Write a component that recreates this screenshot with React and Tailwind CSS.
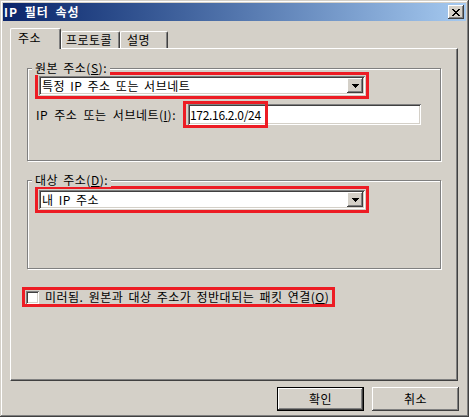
import React from 'react'

const raised =
  'shadow-[inset_-1px_-1px_#404040,inset_1px_1px_#ffffff,inset_-2px_-2px_#808080,inset_2px_2px_#d4d0c8]'
const sunken =
  'shadow-[inset_1px_1px_#808080,inset_-1px_-1px_#ffffff,inset_2px_2px_#404040,inset_-2px_-2px_#d4d0c8]'
const frame =
  'shadow-[inset_-1px_-1px_#404040,inset_1px_1px_#d4d0c8,inset_-2px_-2px_#808080,inset_2px_2px_#ffffff]'

function CloseIcon() {
  return (
    <svg width="8" height="7" viewBox="0 0 8 7" shapeRendering="crispEdges">
      <path
        fill="#000"
        d="M0 0h2v1H0zM6 0h2v1H6zM1 1h2v1H1zM5 1h2v1H5zM2 2h4v1H2zM3 3h2v1H3zM2 4h4v1H2zM1 5h2v1H1zM5 5h2v1H5zM0 6h2v1H0zM6 6h2v1H6z"
      />
    </svg>
  )
}

function ArrowIcon() {
  return (
    <svg width="7" height="4" viewBox="0 0 7 4" shapeRendering="crispEdges">
      <path fill="#000" d="M0 0h7v1H0zM1 1h5v1H1zM2 2h3v1H2zM3 3h1v1H3z" />
    </svg>
  )
}

function Combo({ text }) {
  return (
    <div className="ml-[7px] w-[334px] border-[3px] border-[#ed1c24] p-[1px]">
      <div className={`h-[19px] bg-white flex items-center ${sunken}`}>
        <span className="flex-1 pl-[3px] whitespace-nowrap">{text}</span>
        <div className={`mr-[2px] w-[16px] h-[15px] bg-[#d4d0c8] flex items-center justify-center ${raised}`}>
          <ArrowIcon />
        </div>
      </div>
    </div>
  )
}

function Group({ label, hotkey, className, children }) {
  return (
    <div
      className={`relative ml-[16px] w-[414px] border border-[#808080] shadow-[inset_1px_1px_#ffffff,1px_1px_#ffffff] ${className}`}
    >
      <span className="absolute left-[4px] top-[-8px] bg-[#d4d0c8] px-[3px] whitespace-nowrap">
        {label}(<u>{hotkey}</u>):
      </span>
      {children}
    </div>
  )
}

export default function App() {
  return (
    <div
      className={`w-[469px] h-[417px] bg-[#d4d0c8] p-[3px] flex flex-col text-[12px] leading-[14px] tracking-[0.5px] [word-spacing:2px] text-black font-['Noto_Sans_CJK_KR','Noto_Sans',sans-serif] ${frame}`}
    >
      {/* title bar */}
      <div className="h-[18px] flex items-center justify-between bg-linear-to-r from-[#0a246a] to-[#a6caf0] pl-[1px] pr-[2px]">
        <span className="font-bold text-white whitespace-nowrap tracking-[1px] [word-spacing:3px]">IP 필터 속성</span>
        <div className={`w-[16px] h-[14px] bg-[#d4d0c8] flex items-center justify-center ${raised}`}>
          <CloseIcon />
        </div>
      </div>

      {/* tabs */}
      <div className="mt-[7px] ml-[7px] h-[20px] flex items-end">
        <div className="relative z-10 -mb-px h-[21px] w-[51px] bg-[#d4d0c8] border-t border-l border-r border-white border-r-[#404040] rounded-t-[2px] shadow-[inset_-1px_0_#808080] pl-[7px] pt-[2px]">
          주소
        </div>
        <div className="h-[17px] w-[59px] border-t border-l border-r border-white border-r-[#404040] rounded-t-[2px] shadow-[inset_-1px_0_#808080] pl-[4px] pt-[1px] whitespace-nowrap">
          프로토콜
        </div>
        <div className="h-[17px] w-[48px] border-t border-l border-r border-white border-r-[#404040] rounded-t-[2px] shadow-[inset_-1px_0_#808080] pl-[6px] pt-[1px]">
          설명
        </div>
      </div>

      {/* tab page */}
      <div className="ml-[7px] w-[448px] h-[333px] border border-white border-r-[#404040] border-b-[#404040] shadow-[inset_-1px_-1px_#808080] pt-[19px]">
        <Group label="원본 주소" hotkey="S" className="h-[93px]">
          <div className="mt-[3px]">
            <Combo text="특정 IP 주소 또는 서브네트" />
          </div>
          <div className="mt-[5px] flex items-center pl-[8px]">
            <span className="whitespace-nowrap [word-spacing:3px]">
              IP 주소 또는 서브네트(<u>I</u>):
            </span>
            <div className={`relative ml-auto mr-[19px] w-[233px] h-[21px] bg-white flex items-center pl-[2px] ${sunken}`}>
              <span className="tracking-[-0.3px]">172.16.2.0/24</span>
              <div className="absolute left-[-5px] top-[-3px] w-[85px] h-[27px] border-[3px] border-[#ed1c24]" />
            </div>
          </div>
        </Group>

        <Group label="대상 주소" hotkey="D" className="mt-[19px] h-[89px]">
          <div className="mt-[5px]">
            <Combo text="내 IP 주소" />
          </div>
        </Group>

        <div className="mt-[18px] ml-[11px] w-[313px] h-[20px] border-[3px] border-[#ed1c24] flex items-center pl-[1px]">
          <div className={`w-[13px] h-[13px] bg-white shrink-0 ${sunken}`} />
          <span className="ml-[6px] whitespace-nowrap">
            미러됨. 원본과 대상 주소가 정반대되는 패킷 연결(<u>O</u>)
          </span>
        </div>
      </div>

      {/* buttons */}
      <div className="mt-[6px] pr-[7px] flex justify-end gap-[8px]">
        <button className={`w-[87px] h-[24px] bg-[#d4d0c8] border border-black flex items-center justify-center ${raised}`}>
          확인
        </button>
        <button className={`w-[87px] h-[24px] bg-[#d4d0c8] flex items-center justify-center ${raised}`}>
          취소
        </button>
      </div>
    </div>
  )
}
